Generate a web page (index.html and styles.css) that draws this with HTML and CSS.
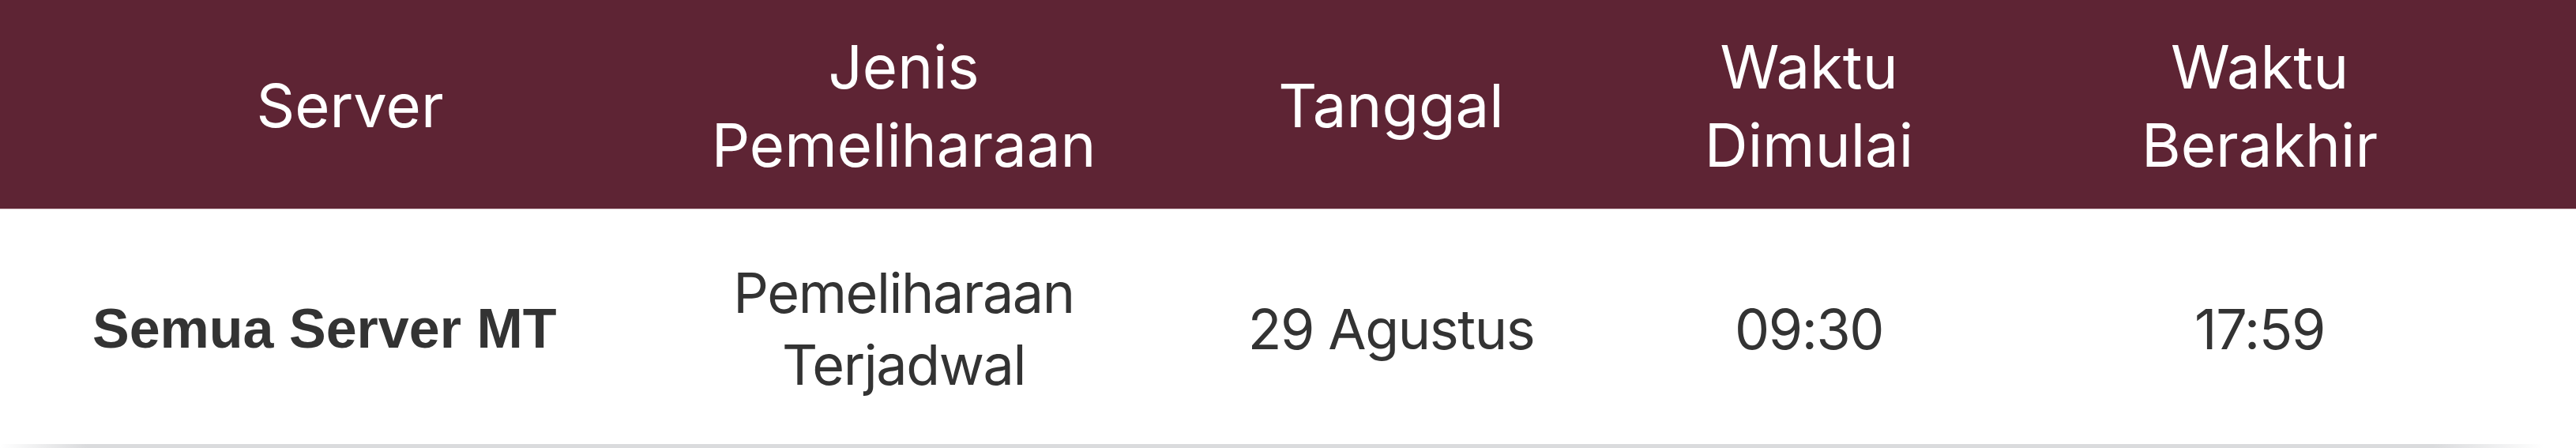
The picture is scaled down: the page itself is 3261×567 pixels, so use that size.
FILE: index.html
```html
<!DOCTYPE html>
<html lang="id">
<head>
<meta charset="utf-8">
<title>Jadwal Pemeliharaan</title>
<link rel="stylesheet" href="styles.css">
</head>
<body>
<div class="wrap">
  <table class="schedule">
    <colgroup>
      <col class="c1">
      <col class="c2">
      <col class="c3">
      <col class="c4">
      <col class="c5">
    </colgroup>
    <thead>
      <tr>
        <th>Server</th>
        <th>Jenis<br>Pemeliharaan</th>
        <th>Tanggal</th>
        <th>Waktu<br>Dimulai</th>
        <th>Waktu<br>Berakhir</th>
      </tr>
    </thead>
    <tbody>
      <tr>
        <td class="name">Semua Server MT</td>
        <td>Pemeliharaan<br>Terjadwal</td>
        <td>29 Agustus</td>
        <td>09:30</td>
        <td>17:59</td>
      </tr>
    </tbody>
  </table>
  <div class="shade"></div>
</div>
</body>
</html>
```
FILE: styles.css
```css
html, body {
  margin: 0;
  padding: 0;
  background: #ffffff;
}

.wrap {
  width: 3261px;
}

.schedule {
  width: 3261px;
  border-collapse: collapse;
  table-layout: fixed;
  font-family: "Inter", "Noto Sans", sans-serif;
}

.c1 { width: 886px; }
.c2 { width: 516px; }
.c3 { width: 718px; }
.c4 { width: 340px; }
.c5 { width: 801px; }

.schedule th {
  background: #5e2434;
  color: #ffffff;
  font-weight: 400;
  font-size: 76px;
  line-height: 98.5px;
  text-align: center;
  vertical-align: middle;
  padding: 35px 0 32px;
  border-bottom: 1px solid #d9c6cb;
  white-space: nowrap;
}

.schedule td {
  color: #333333;
  font-size: 70px;
  line-height: 91px;
  letter-spacing: -1.4px;
  text-align: center;
  vertical-align: middle;
  padding: 60px 0 55px;
  white-space: nowrap;
}

.schedule td.name {
  text-align: left;
  padding-left: 117px;
  letter-spacing: 0;
  font-family: "Liberation Sans Narrow", "Arial Narrow", "Liberation Sans", sans-serif;
  font-weight: 700;
}

.shade {
  height: 5px;
  background: linear-gradient(to right, rgba(218,219,221,0) 0, #dadbdd 110px, #dadbdd 3080px, rgba(218,219,221,0) 3220px);
}
```
